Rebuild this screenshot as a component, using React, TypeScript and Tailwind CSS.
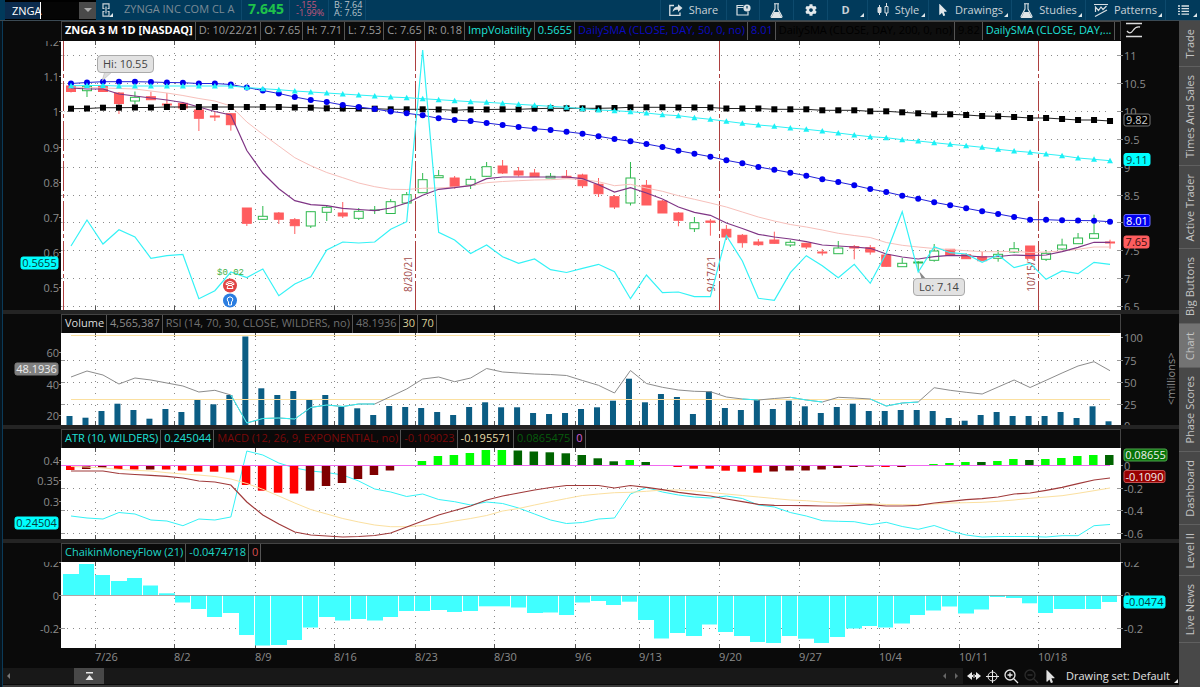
import type { ReactNode } from "react";
import { FaCog, FaMousePointer } from "react-icons/fa";

const LEFT = 61;
const WIDTH = 1060;
const STEP = 15.985;
const xAt = (i: number) => 71 + STEP * i;
const pct = (x: number) => `${((x - LEFT) / WIDTH) * 100}%`;

const weeks = [
  { x: 95, label: "7/26" },
  { x: 174, label: "8/2" },
  { x: 255, label: "8/9" },
  { x: 334, label: "8/16" },
  { x: 415, label: "8/23" },
  { x: 494, label: "8/30" },
  { x: 575, label: "9/6" },
  { x: 639, label: "9/13" },
  { x: 719, label: "9/20" },
  { x: 799, label: "9/27" },
  { x: 879, label: "10/4" },
  { x: 959, label: "10/11" },
  { x: 1038, label: "10/18" },
];

const sma50 = [83.5, 82.5, 81.7, 81.7, 81.7, 82, 82.5, 82.7, 83.5, 83.5, 84.5, 87.5, 90.5, 93.5, 97, 100, 102, 105, 107, 109, 111.5, 113.3, 115.3, 118.3, 120, 121, 123, 125, 127, 128.7, 130, 131.7, 133.7, 136.3, 139, 141.3, 144, 147, 150.7, 153.7, 156.7, 160.3, 163.3, 167, 169.7, 172.7, 175.7, 179.3, 182, 185.3, 189, 192, 195.7, 198.7, 202.3, 205.3, 208.3, 211.3, 214, 217, 219.7, 219.7, 220.3, 220.5, 220.7, 221.7];
const sma200 = [108.7, 108.5, 107.7, 107.7, 107.5, 107.5, 107, 107, 107, 107, 107, 107, 107, 107, 107.5, 107.7, 108.3, 108.5, 108.5, 108.7, 109.3, 109.3, 109.3, 109.5, 110.3, 109.5, 109.5, 109.3, 109.3, 108.7, 108.3, 108.3, 108.3, 108.3, 108, 107.3, 107.3, 107.3, 107.5, 107.5, 107.5, 108.5, 108.5, 108.5, 109.3, 109.3, 109.3, 110.3, 110.3, 110.3, 111.3, 111.3, 112.3, 113.3, 114.3, 114.3, 115, 116, 116.3, 117, 118, 118, 119, 120, 120, 121];
const sma100 = [85.7, 85.5, 85.5, 86, 86, 86, 86, 86, 86, 86, 86, 87.5, 88.7, 89.7, 91, 92, 93, 94, 95, 96, 97, 97.7, 98.7, 99.7, 100.7, 101.7, 102.3, 103.3, 104.3, 105.3, 106.3, 107.3, 108.7, 110, 110.7, 111.7, 113, 114.7, 115.7, 117.7, 119.3, 121.3, 123.3, 125, 126.3, 128, 129.3, 131, 133, 135, 136.7, 137.7, 139.7, 141, 142.7, 144.3, 145.7, 147.3, 149.3, 151, 152.3, 154, 155.7, 158, 159.3, 160.7];
const impVol = [246, 220, 244, 229.7, 237, 258.3, 255.7, 254.5, 298.7, 290.7, 272, 277.5, 269, 295.7, 284, 276.7, 250, 242, 243, 242, 229.3, 221.7, 50, 232.3, 240, 253.5, 245, 256.7, 263.3, 259, 269.7, 272.5, 268.3, 264.3, 271.7, 298.7, 275, 292.7, 292, 296.7, 296.7, 235.7, 261, 298.3, 300.3, 272.7, 255.7, 265.7, 277.7, 264.3, 283.3, 253.3, 211.7, 272, 246.7, 252.7, 254, 262.3, 255, 267.7, 263.3, 279.3, 271, 273.7, 262.3, 264.3];
const emaFast = [88, 89, 89, 94, 96, 98, 100, 102.5, 107, 111.5, 115, 150.5, 173, 188.7, 200.7, 204.7, 205.7, 208.3, 209.5, 210.7, 208, 203, 195.3, 189.3, 187.7, 185.7, 178.7, 177, 177, 177, 177, 177, 178.7, 184.7, 192, 187.7, 193, 199, 207, 212.3, 215.3, 223, 228.5, 234.3, 237, 239, 241.7, 245, 246, 247, 248.3, 254, 257, 259, 256.7, 255.3, 255.7, 257, 256.5, 255, 255.7, 255, 251.7, 247.3, 242.3, 242.3];
const emaSlow = [87, 87.5, 88, 88.5, 89, 91, 93, 95.5, 98.5, 101, 106, 122, 134.3, 146, 157.7, 165.7, 172.5, 177.7, 183, 186.7, 189.3, 189.5, 188.3, 188, 187, 185.5, 182.7, 181.5, 180.7, 180, 179.7, 178.7, 179.5, 181.7, 185.7, 184.3, 188, 191.3, 195.7, 199.3, 203, 207, 212, 217, 221, 224.5, 227, 230, 233.3, 235.5, 237.5, 242.5, 245.3, 247, 248.5, 249.7, 250.7, 251.7, 251.7, 251.3, 252.5, 252, 251, 249.3, 247, 247];

// [top, bottom, high, low, up]
const candles: [number, number, number, number, 0 | 1][] = [
  [86, 91.5, 85, 92.5, 0], [86.3, 90.7, 84, 97, 1], [86.5, 91.5, 86, 92, 0], [93, 103.5, 92, 114, 0],
  [97.3, 101, 91.5, 104, 1], [96.7, 99.7, 91.7, 100, 0], [104, 105, 93, 108, 0], [103.3, 108, 102, 110, 0],
  [110, 118.3, 109, 131, 0], [116, 117, 112, 121, 0], [113.7, 124.7, 113, 130.7, 0], [208, 223.3, 208, 226, 0],
  [216.3, 219.3, 206, 220, 1], [213, 219.3, 212, 224, 0], [219.7, 225.7, 218, 234, 0], [211.7, 226, 211, 228, 1],
  [207.3, 212.3, 205, 221, 1], [213, 216, 202, 218, 0], [211.3, 218.3, 208, 220, 1], [210, 210.5, 206, 214, 1],
  [201.7, 213.5, 199, 214, 1], [194.7, 203, 192, 203, 1], [179.7, 192.7, 173, 193, 1], [175.7, 177.7, 170, 178, 1],
  [178, 186.3, 176, 188.7, 0], [179.3, 185, 176, 189, 1], [166.7, 176.3, 162, 177, 1], [166, 173, 160, 174, 0],
  [171, 175, 167, 176.5, 0], [173, 176.7, 169, 177, 0], [176.3, 178, 173, 178, 1], [176.3, 177.7, 170, 178, 0],
  [175, 185.7, 173.7, 188, 0], [184.3, 193.7, 178, 197, 0], [196.7, 207, 195, 209, 0], [178, 203, 162, 205.5, 1],
  [185.3, 205, 180, 205, 0], [201, 213, 200, 213, 0], [213, 220.3, 212, 226.3, 0], [222.7, 228.7, 217, 232, 1],
  [221, 222.3, 219, 235.7, 0], [229.3, 237, 225, 240, 0], [235.3, 242.7, 234, 247.7, 0], [242, 244.7, 239, 246, 0],
  [240, 243.3, 231.7, 244, 0], [242.3, 245, 240, 247, 1], [243.3, 247, 243, 249, 0], [252, 253, 249, 255.5, 0],
  [248, 253.7, 241, 254, 1], [246.5, 248, 245, 259.3, 0], [247.7, 252, 245, 254.7, 0], [255, 266.3, 254, 267, 0],
  [263.3, 266.7, 258, 267, 1], [262, 263, 261, 271, 1], [251, 260.3, 244, 261.7, 1], [249.3, 255.3, 249, 255, 0],
  [254.7, 258.7, 253, 259, 0], [256.7, 260.7, 252, 261, 0], [254.3, 258.3, 250, 261.7, 1], [248.7, 252, 242, 253, 1],
  [246, 258.3, 246, 258, 0], [253.3, 259.3, 250, 261, 1], [245, 249, 238.7, 250, 1], [238, 243.7, 233, 244, 1],
  [233.7, 238.3, 214.7, 239, 1], [242, 243, 239.7, 248.7, 0],
];

const volume = [416, 417.7, 411, 403.7, 410, 418.7, 409, 412, 399.5, 404.3, 395, 336.5, 388.3, 395, 391, 399.7, 395, 407, 408.3, 415, 406, 407, 408, 412, 415, 407, 402.3, 407.3, 407.3, 413, 414, 413, 409, 407.3, 400.7, 378.7, 402.3, 394, 397, 414, 391.3, 408, 410, 400, 409, 400.7, 406.3, 413, 407, 403.7, 411, 411, 410, 410, 411, 418, 420.7, 415, 412, 416, 416, 416, 412, 418, 406.3, 421.3];
const rsi = [377, 371, 375, 384, 378, 380, 383, 386, 392, 390.3, 395, 423, 418.5, 418, 419, 407.5, 405, 406.5, 404, 404, 396.5, 389, 379, 377, 381.7, 378, 368.5, 372, 373, 374, 374.5, 375.5, 380.5, 385.3, 393, 370.5, 383.5, 387.3, 390, 391.3, 391.7, 397, 399, 400, 398.5, 397.3, 400, 402, 397.3, 398, 399, 406, 403, 402, 387.7, 390.3, 392.3, 394, 387, 380, 387.5, 380.3, 373, 366, 361.7, 370.7];
const oversold = [[10, 19], [42, 43], [45, 47], [50, 53]];

const histogram = [470, 469, 467.5, 469, 469.5, 469.5, 469.5, 470.5, 471.7, 471.7, 472.5, 485, 490.7, 492.7, 493.5, 490.7, 486, 483, 479, 475, 470.5, 466, 461, 456, 455, 453, 450, 450, 450.5, 451.5, 452.3, 453.3, 455, 458.3, 461.3, 460, 462, 465, 467, 468.7, 468.7, 470.7, 471.7, 472.7, 471.5, 470.5, 470.5, 469.5, 468, 467, 466.7, 467, 467, 466, 464, 463, 462, 462, 461, 459, 460, 459, 458, 456, 455, 455];
const macd = [471, 471, 471, 473.5, 474.5, 475.3, 476.3, 478, 481, 482, 485, 502, 515, 524, 532, 535, 536, 537, 536.5, 535.5, 533, 527, 521, 515, 510.5, 506, 500, 496, 493, 490, 487.5, 485.5, 485.5, 485.5, 488, 485.5, 487.3, 489.7, 492.3, 494.3, 496, 499, 501.7, 504.3, 505.3, 505.5, 505.7, 506, 506, 505.3, 504.7, 506, 506, 505.3, 503, 501.3, 499.7, 498.7, 497, 494, 493, 490.3, 487.3, 483.7, 480, 478];
const signal = [466.5, 467, 468, 469.3, 470.3, 471, 472.7, 474, 475, 476.5, 479, 483.5, 489.3, 496, 503, 509.5, 514, 518.5, 522, 525, 526.7, 526.7, 525.5, 524, 521, 518.5, 515.5, 511, 508.5, 505, 501.7, 498.5, 495.5, 494, 492.7, 492.3, 491.3, 490, 490, 491, 492.5, 494, 495.5, 497, 498.5, 500, 500.7, 502, 503, 503.3, 503.7, 504.5, 504.7, 504.7, 504, 503, 502.7, 502.3, 501.3, 500, 498.3, 497, 495.7, 493.3, 490.7, 488];
const atr = [516, 518, 519, 512.5, 514, 520, 521, 525.7, 519, 520, 517, 451, 455, 463, 468, 471, 472.5, 475, 481, 489, 492, 496.5, 494, 499.5, 501.7, 505, 502, 503.5, 508, 514, 520, 523.5, 522.5, 519, 518, 494, 487.5, 492, 495, 497, 498, 496, 498.5, 505, 507, 512.5, 516, 520.7, 521.3, 521.7, 524.7, 522.3, 526.5, 529.3, 525.5, 531, 535, 537, 536.5, 536.5, 536.5, 537, 535.7, 535.7, 525.7, 524.5];
const moneyFlow = [574, 564, 575, 581, 578, 585.5, 593.3, 602.5, 609, 617, 613, 635, 645.5, 645, 640, 627.5, 617, 620.5, 619, 620.5, 617, 611, 611, 610, 612, 611, 606.3, 606.3, 607.5, 613, 612.5, 615, 602.5, 601, 605, 601.7, 620, 638.5, 633, 636, 624.5, 632, 636, 642, 643, 636, 638.7, 643, 637, 628.5, 626, 627.5, 623.5, 615, 610.5, 606.5, 613.5, 609.5, 597, 598, 603.3, 613, 609, 609, 609, 602];
const joined = new Set([0, 3, 6, 10, 13, 16, 19, 23, 26, 29, 33, 36, 39, 42, 46, 49, 52, 56, 59, 62]);

const GREEN = "#2db84d";
const RED = "#ff5d5f";

function histColor(i: number) {
  const v = 465 - histogram[i];
  const prev = i ? 465 - histogram[i - 1] : 0;
  if (v >= 0) return v > prev || i === 27 ? "#00ff00" : "#006400";
  return v < prev || [6, 9, 39, 40].includes(i) ? "#ff0000" : "#7f0000";
}

interface LineProps {
  data: number[];
  color: string;
  from?: number;
  to?: number;
  width?: number;
}

function Line({ data, color, from = 0, to = 65, width = 1 }: LineProps) {
  const points = data
    .slice(from, to + 1)
    .map((y, i) => `${xAt(from + i)},${y}`)
    .join(" ");
  return <polyline points={points} fill="none" stroke={color} strokeWidth={width} />;
}

interface Tick {
  y: number;
  label: string;
}

interface Badge extends Tick {
  w: number;
  fill: string;
  color: string;
  border?: string;
}

interface AxisProps {
  top: number;
  height: number;
  ticks: Tick[];
  badges?: Badge[];
  side: "left" | "right";
  children?: ReactNode;
}

function Axis({ top, height, ticks, badges = [], side, children }: AxisProps) {
  const left = side === "left";
  return (
    <svg
      width={58}
      height={height}
      viewBox={`0 ${top} 58 ${height}`}
      className="shrink-0 text-[11px]"
    >
      {ticks.map((t) => (
        <g key={t.y}>
          <path d={left ? `M56 ${t.y}h2` : `M0 ${t.y}h2`} stroke="#8c8c8c" />
          {t.label && (
            <text x={left ? 56 : 3} y={t.y + 4} textAnchor={left ? "end" : "start"} fill="#8c8c8c">
              {t.label}
            </text>
          )}
        </g>
      ))}
      {badges.map((b) => (
        <g key={b.label}>
          <rect
            x={left ? 55 - b.w : 3}
            y={b.y - 6}
            width={b.w}
            height={12}
            rx={2}
            fill={b.fill}
            stroke={b.border ?? b.fill}
          />
          <text x={left ? 55 - b.w / 2 : 3 + b.w / 2} y={b.y + 4} textAnchor="middle" fill={b.color}>
            {b.label}
          </text>
        </g>
      ))}
      {children}
    </svg>
  );
}

function Plot({ top, height, rows, children }: { top: number; height: number; rows: number[]; children: ReactNode }) {
  return (
    <svg
      viewBox={`${LEFT} ${top} ${WIDTH} ${height}`}
      preserveAspectRatio="none"
      height={height}
      className="relative block w-full"
    >
      <g stroke="#8a8a8a" strokeDasharray="1 5">
        {weeks.map((w) => (
          <path key={w.x} d={`M${w.x}.5 ${top}v${height}`} />
        ))}
        {rows.map((y) => (
          <path key={y} d={`M${LEFT + 6} ${y}H1110`} />
        ))}
      </g>
      <g stroke="#555">
        {weeks.map((w) => (
          <path key={w.x} d={`M${w.x}.5 ${top}v4M${w.x}.5 ${top + height}v-4`} />
        ))}
        {rows.map((y) => (
          <path key={y} d={`M${LEFT} ${y}h4M1121 ${y}h-4`} stroke="#999" />
        ))}
      </g>
      {children}
    </svg>
  );
}

function Panel({ left, right, children }: { left: ReactNode; right: ReactNode; children: ReactNode }) {
  return (
    <div className="flex">
      {left}
      <div className="relative min-w-0 flex-1 bg-white">{children}</div>
      {right}
    </div>
  );
}

function Legend({ items }: { items: [string, string][] }) {
  return (
    <div className="mx-[58px] flex h-[19px] items-stretch overflow-hidden border-x border-t border-[#444] text-[11px] leading-4">
      {items.map(([text, style]) => (
        <span key={text} className={`shrink-0 border-r border-[#555] pr-[2px] pl-[3px] whitespace-nowrap ${style}`}>
          {text}
        </span>
      ))}
    </div>
  );
}

function Corner() {
  return (
    <span className="absolute right-[3px] bottom-[3px] border-b-4 border-l-4 border-b-[#dfe6ea] border-l-transparent" />
  );
}

function ToolButton({ width, label, menu, children }: { width: string; label: string; menu?: boolean; children: ReactNode }) {
  return (
    <button
      aria-label={label}
      className={`relative flex shrink-0 items-center justify-center gap-[6px] border-l border-[#0d4a6d] ${width}`}
    >
      {children}
      {menu && <Corner />}
    </button>
  );
}

function Toolbar() {
  return (
    <header className="flex h-[21px] items-stretch border-b border-[#3b4a54] bg-[#013a5b] text-[11px] leading-[18px] text-[#c9d2d8]">
      <div className="ml-[5px] flex w-[91px] items-center bg-black">
        <label htmlFor="symbol" className="sr-only">
          Symbol
        </label>
        <div className="relative flex-1">
          <input
            id="symbol"
            defaultValue="ZNGA"
            className="block h-[17px] w-full bg-[linear-gradient(90deg,#0b2b4d_35px,#050505_35px)] pl-[7px] text-[11px] leading-[17px] text-white outline-none"
          />
          <span className="absolute top-0 left-[35px] h-[17px] w-px bg-white" />
        </div>
        <button aria-label="Symbol list" className="flex h-[17px] w-[17px] items-center justify-center bg-[#4a4a4a]">
          <span className="border-x-4 border-t-4 border-x-transparent border-t-[#aaa]" />
        </button>
      </div>
      <button aria-label="Link symbol" className="relative flex w-[20px] items-center justify-center">
        <svg width="8" height="14" viewBox="0 0 8 14" fill="none" stroke="#c9d2d8" strokeWidth="1.200">
          <path d="M2.500 5.500H1V.8h6v4.700H5.500M2.500 8.500H1v4.700h6V8.500H5.500M4 3.500v7" />
        </svg>
        <Corner />
      </button>
      <span className="w-[125px] pl-[8px] whitespace-nowrap text-[#7b8b96]">ZYNGA INC COM CL A</span>
      <span className="w-[48px] border-l border-[#0d4a6d] pl-[6px] text-[14px] font-bold text-[#1fc24a]">7.645</span>
      <div className="w-[39px] border-l border-[#0d4a6d] pt-px pl-[6px] text-[9px] leading-[8px] text-[#c6567c]">
        <p>-.155</p>
        <p>-1.99%</p>
      </div>
      <div className="w-[38px] border-x border-[#0d4a6d] pt-px pl-[5px] text-[9px] leading-[8px] whitespace-nowrap text-[#b9c4cb]">
        <p>B: 7.64</p>
        <p>A: 7.65</p>
      </div>
      <nav className="ml-auto flex">
        <ToolButton width="w-[66px]" label="Share">
          <svg width="14" height="12" viewBox="0 0 14 12" fill="none" stroke="#d8dfe3" strokeWidth="1.3">
            <path d="M5 1.500H.8V11.300H11V8.500" />
            <path d="M13.500 4 9 .3V2.500C5.500 2.700 4 5 3.600 8 5 6 6.500 5.600 9 5.700V8Z" fill="#d8dfe3" stroke="none" />
          </svg>
          Share
        </ToolButton>
        <ToolButton width="w-[33px]" label="Calendar">
          <svg width="15" height="12" viewBox="0 0 15 12" fill="none" stroke="#d8dfe3" strokeWidth="1.200">
            <path d="M7.500 1.500H1v9.500h11V7.500M1 3.500h6.500" />
            <circle cx="11" cy="4" r="3.600" fill="#d8dfe3" stroke="none" />
            <path d="M11 2v2.500" stroke="#013a5b" />
          </svg>
        </ToolButton>
        <ToolButton width="w-[34px]" label="Lab">
          <FlaskIcon />
        </ToolButton>
        <ToolButton width="w-[34px]" label="Settings">
          <FaCog size={12} color="#e2e8eb" />
        </ToolButton>
        <ToolButton width="w-[40px]" label="Aggregation" menu>
          <span className="pr-1 font-bold">D</span>
        </ToolButton>
        <ToolButton width="w-[61px]" label="Style" menu>
          <svg width="12" height="14" viewBox="0 0 12 14" fill="none" stroke="#d8dfe3">
            <path d="M2.500 2v10M9.500 0v3M9.500 10v3" />
            <path d="M1 4.500h3v5H1z" fill="#d8dfe3" />
            <path d="M8 3.500h3v6.500H8z" />
          </svg>
          Style
        </ToolButton>
        <ToolButton width="w-[83px]" label="Drawings" menu>
          <FaMousePointer size={12} color="#e2e8eb" />
          Drawings
        </ToolButton>
        <ToolButton width="w-[74px]" label="Studies" menu>
          <FlaskIcon />
          Studies
        </ToolButton>
        <ToolButton width="w-[80px]" label="Patterns" menu>
          <svg width="14" height="15" viewBox="0 0 14 15" fill="none" stroke="#d8dfe3" strokeWidth="1.200">
            <path d="M0 1.500h14M1 13.500 13 7M1.500 9V4l3 3.500L7 4l2 2.500L12.500 3" />
          </svg>
          Patterns
        </ToolButton>
        <ToolButton width="w-[35px]" label="Menu" menu>
          <svg width="11" height="10" viewBox="0 0 11 10" stroke="#d8dfe3" strokeWidth="1.300">
            <path d="M0 1h2M3.500 1H11M0 3.700h2M3.500 3.700H11M0 6.400h2M3.500 6.400H11M0 9.100h2M3.500 9.100H11" />
          </svg>
        </ToolButton>
      </nav>
    </header>
  );
}

function FlaskIcon() {
  return (
    <svg width="13" height="15" viewBox="0 0 13 15" fill="none" stroke="#dfe5e8" strokeWidth="1.100">
      <path d="M4 .7h5M5 1v5L1 13.500q0 1 1 1h9q1 0 1-1L8 6V1" />
      <path d="M4 9h5l2.500 5h-10z" fill="#dfe5e8" stroke="none" />
    </svg>
  );
}

const priceLegend: [string, string][] = [
  ["ZNGA 3 M 1D [NASDAQ]", "font-bold text-white"],
  ["D: 10/22/21", "text-[#9a9a9a]"],
  ["O: 7.65", "text-[#9a9a9a]"],
  ["H: 7.71", "text-[#9a9a9a]"],
  ["L: 7.53", "text-[#9a9a9a]"],
  ["C: 7.65", "text-[#9a9a9a]"],
  ["R: 0.18", "text-[#9a9a9a]"],
  ["ImpVolatility", "text-[#1fe0d8]"],
  ["0.5655", "text-[#1fe0d8]"],
  ["DailySMA (CLOSE, DAY, 50, 0, no)", "text-[#0a0ac0]"],
  ["8.01", "text-[#0a0ac0]"],
  ["DailySMA (CLOSE, DAY, 200, 0, no)", "bg-[#0e0e0e] text-black"],
  ["9.82", "bg-[#0e0e0e] text-black"],
  ["DailySMA (CLOSE, DAY,...", "text-[#1fe0d8]"],
];

// the 8 is covered by the 8.01 badge, so it has no label
const priceTicks = ["11", "10.5", "10", "9.5", "9", "8.5", "", "7.5", "7", "6.5"].map((label, i) => ({
  y: 55.5 + Math.round(i * 27.9),
  label,
}));
const priceRows = priceTicks.map((t) => t.y);

function PricePanel() {
  return (
    <Panel
      left={
        <Axis
          side="left"
          top={41}
          height={269}
          ticks={["1.2", "1.1", "1", "0.9", "0.8", "0.7", "0.6", "0.5"].map((label, i) => ({
            y: 41.5 + Math.round(i * 35.2),
            label,
          }))}
          badges={[{ y: 263, w: 37, label: "0.5655", fill: "#00ffff", color: "#063b3b" }]}
        />
      }
      right={
        <Axis
          side="right"
          top={41}
          height={269}
          ticks={priceTicks}
          badges={[
            { y: 120, w: 26, label: "9.82", fill: "#000", color: "#ccc", border: "#777" },
            { y: 159.5, w: 26, label: "9.11", fill: "#00ffff", color: "#063b3b" },
            { y: 220.5, w: 26, label: "8.01", fill: "#0000f0", color: "#fff", border: "#6a6aff" },
            { y: 242, w: 25, label: "7.65", fill: "#ff5d5f", color: "#3a0c0c" },
          ]}
        />
      }
    >
      {[
        { x: 402, label: "8/20/21" },
        { x: 705, label: "9/17/21" },
        { x: 1025, label: "10/15/21" },
      ].map((d) => (
        <span
          key={d.label}
          style={{ left: pct(d.x) }}
          className="absolute bottom-[18px] rotate-180 text-[10px] leading-3 text-[#a34b4b] [writing-mode:vertical-rl]"
        >
          {d.label}
        </span>
      ))}
      <Plot top={41} height={269} rows={priceRows}>
        <g stroke="#fff" strokeWidth={2}>
          {[63, 415, 719, 1038].map((x) => (
            <path key={x} d={`M${x}.5 41v269`} />
          ))}
        </g>
        <g stroke="#ad3f3f" strokeDasharray="30 3 4 3">
          {[63, 415, 719, 1038].map((x) => (
            <path key={x} d={`M${x}.5 41v269`} />
          ))}
        </g>
        {candles.map(([t, b, h, l, up], i) => (
          <g key={i} stroke={up ? GREEN : RED}>
            <path d={`M${xAt(i)} ${h}V${t}M${xAt(i)} ${b}V${l}`} />
            <rect x={xAt(i) - 4.5} y={t} width={9} height={b - t} fill={up ? "#fff" : RED} />
          </g>
        ))}
        <Line data={emaSlow} color="#f7c0bb" />
        <Line data={emaFast} color="#7f3585" width={1.2} />
        <Line data={sma200} color="#222" />
        {sma200.map((y, i) => (
          <rect key={i} x={xAt(i) - 3} y={y - 3} width={6} height={6} />
        ))}
        <Line data={sma50} color="#2222d8" />
        {sma50.map((y, i) => (
          <circle key={i} cx={xAt(i)} cy={y} r={3} fill="#0000f0" />
        ))}
        <Line data={sma100} color="#2ef0f5" />
        {sma100.map((y, i) => (
          <path key={i} d={`M${xAt(i)} ${y - 3}l3 5.500h-6z`} fill="#1cf0f5" />
        ))}
        <Line data={impVol} color="#34f2f6" width={1.2} />
        <g>
          <circle cx="230" cy="285.500" r="7" fill="#e04444" />
          <path d="M226 283.500q4-4 8 0v1h-2v-1h-4v1h-2zM227 288.500l1-3h4l1 3z" fill="none" stroke="#fff" />
          <circle cx="230" cy="300.500" r="7" fill="#2b7de0" />
          <path d="M228.500 302q-2-2-1-4 2.500-2.500 5 0 1 2-1 4v3h-3z" fill="none" stroke="#fff" />
        </g>
        <path d="M102 81l3-10h8z" fill="#ddd" stroke="#aaa" strokeWidth=".5" />
        <path d="M919 271l3 9h5z" fill="#888" />
      </Plot>
      <span
        style={{ left: pct(217) }}
        className="absolute top-[226px] font-['Liberation_Mono',monospace] text-[9px] leading-3 text-[#3cb043]"
      >
        $0.02
      </span>
      <span
        style={{ left: pct(97) }}
        className="absolute top-[14px] rounded border border-[#aaa] bg-[#e2e2e2] px-[5px] text-[11px] leading-4 text-[#444]"
      >
        Hi: 10.55
      </span>
      <span
        style={{ left: pct(913) }}
        className="absolute top-[237px] rounded border border-[#aaa] bg-[#e2e2e2] px-[5px] text-[11px] leading-4 text-[#444]"
      >
        Lo: 7.14
      </span>
    </Panel>
  );
}

function VolumePanel() {
  return (
    <Panel
      left={
        <Axis
          side="left"
          top={333}
          height={92}
          ticks={[
            { y: 352.5, label: "60" },
            { y: 384.5, label: "40" },
            { y: 415.5, label: "20" },
          ]}
          badges={[{ y: 369, w: 43, label: "48.1936", fill: "#808080", color: "#eee" }]}
        />
      }
      right={
        <Axis
          side="right"
          top={333}
          height={92}
          ticks={[
            { y: 337.5, label: "100" },
            { y: 360.5, label: "75" },
            { y: 382.5, label: "50" },
            { y: 404.5, label: "25" },
            { y: 425.5, label: "0" },
          ]}
        >
          <text transform="translate(54 405) rotate(-90)" fill="#8c8c8c">
            &lt;millions&gt;
          </text>
        </Axis>
      }
    >
      <Plot top={333} height={92} rows={[360.5, 382.5, 404.5]}>
        {volume.map((y, i) => (
          <rect key={i} x={xAt(i) - 4.5} y={y} width={6} height={425 - y} fill="#0b5d84" />
        ))}
        <path d="M71 335.500H1110M71 399.500H1110" stroke="#fbe0a0" />
        <Line data={rsi} color="#8c8c8c" />
        {oversold.map(([a, b]) => (
          <Line key={a} data={rsi} from={a} to={b} color="#34f2f6" />
        ))}
      </Plot>
    </Panel>
  );
}

function MomentumPanel() {
  return (
    <Panel
      left={
        <Axis
          side="left"
          top={448}
          height={91}
          ticks={[
            { y: 460.5, label: "0.4" },
            { y: 480.5, label: "0.35" },
            { y: 501.5, label: "0.3" },
          ]}
          badges={[{ y: 523, w: 43, label: "0.24504", fill: "#00ffff", color: "#063b3b" }]}
        />
      }
      right={
        <Axis
          side="right"
          top={448}
          height={91}
          ticks={[
            { y: 465.5, label: "0" },
            { y: 488.5, label: "-0.2" },
            { y: 510.5, label: "-0.4" },
            { y: 533.5, label: "-0.6" },
          ]}
          badges={[
            { y: 455, w: 43, label: "0.08655", fill: "#067306", color: "#eee", border: "#4ea64e" },
            { y: 476.5, w: 41, label: "-0.1090", fill: "#990000", color: "#eee", border: "#c05050" },
          ]}
        />
      }
    >
      <Plot top={448} height={91} rows={[488.5, 510.5, 533.5]}>
        <Line data={atr} color="#34f2f6" />
        {histogram.map((y, i) => (
          <rect
            key={i}
            x={xAt(i) - 5}
            y={Math.min(y, 465)}
            width={8.5}
            height={Math.abs(y - 465)}
            fill={histColor(i)}
          />
        ))}
        <path d="M61 465.500H1110" stroke="#f06af0" />
        <Line data={signal} color="#fbe0a0" />
        <Line data={macd} color="#a03a3a" width={1.2} />
      </Plot>
    </Panel>
  );
}

function FlowPanel() {
  const ticks = [
    { y: 562.5, label: "0.2" },
    { y: 595.5, label: "0" },
    { y: 628.5, label: "-0.2" },
  ];
  return (
    <Panel
      left={<Axis side="left" top={562} height={86} ticks={ticks} />}
      right={
        <Axis
          side="right"
          top={562}
          height={86}
          ticks={ticks}
          badges={[{ y: 602, w: 41, label: "-0.0474", fill: "#00ffff", color: "#063b3b" }]}
        />
      }
    >
      <Plot top={562} height={86} rows={[628.5]}>
        {moneyFlow.map((y, i) => (
          <rect
            key={i}
            x={Math.round(xAt(i) - 8)}
            y={Math.min(y, 595)}
            width={joined.has(i) ? 16 : 15}
            height={Math.abs(y - 595)}
            fill="#40ffff"
          />
        ))}
        <path d="M61 595.500H1121" stroke="#9c8f8f" strokeWidth=".8" />
      </Plot>
    </Panel>
  );
}

function DateAxis() {
  return (
    <div className="mx-[58px] flex h-5 text-[11px] leading-[18px] text-[#8c8c8c]">
      <span className="basis-0" style={{ flexGrow: weeks[0].x - LEFT }} />
      {weeks.map((w, i) => (
        <span
          key={w.label}
          className="w-0 basis-0 whitespace-nowrap"
          style={{ flexGrow: (weeks[i + 1]?.x ?? LEFT + WIDTH) - w.x }}
        >
          {w.label}
        </span>
      ))}
    </div>
  );
}

function BottomBar() {
  return (
    <footer className="flex h-4 items-stretch text-[#e0e0e0]">
      <div className="flex flex-1 items-center bg-[#181818]">
        <button aria-label="Scroll left" className="ml-[4px] border-y-[3px] border-r-[3px] border-y-transparent border-r-[#777]" />
        <button aria-label="Show panel" className="ml-[64px] flex h-4 w-[30px] items-center justify-center bg-[#484848]">
          <svg width="9" height="9" viewBox="0 0 9 9" fill="#e8e8e8">
            <path d="M1 0h7v1.500H1zM4.500 3 8.500 8h-8z" />
          </svg>
        </button>
        <button aria-label="Previous" className="ml-auto border-y-[3px] border-r-[3px] border-y-transparent border-r-[#666]" />
        <button aria-label="Next" className="mr-[5px] ml-[9px] border-y-[3px] border-l-[3px] border-y-transparent border-l-[#666]" />
      </div>
      <div className="flex items-center gap-[5px] pl-[4px]">
        <button aria-label="Expand">
          <svg width="14" height="10" viewBox="0 0 14 10" fill="#e8e8e8">
            <path d="M0 5 5 1v3h1v2H5v3zM14 5 9 1v3H8v2h1v3zM6.500 3h1v4h-1z" />
          </svg>
        </button>
        <button aria-label="Crosshair">
          <svg width="13" height="13" viewBox="0 0 13 13" fill="none" stroke="#e8e8e8">
            <circle cx="6.500" cy="6.500" r="4.500" />
            <path d="M6.500 0v13M0 6.500h13" />
          </svg>
        </button>
        <ZoomButton label="Zoom in" color="#e8e8e8" plus />
        <ZoomButton label="Zoom out" color="#2c2c2c" />
        <button aria-label="Pointer">
          <FaMousePointer size={13} />
        </button>
        <button className="relative ml-[4px] pr-[9px] text-[11px] leading-[14px]">
          Drawing set: Default
          <span className="absolute right-px bottom-0 border-b-4 border-l-4 border-b-[#e8e8e8] border-l-transparent" />
        </button>
      </div>
    </footer>
  );
}

function ZoomButton({ label, color, plus }: { label: string; color: string; plus?: boolean }) {
  return (
    <button aria-label={label}>
      <svg width="15" height="15" viewBox="0 0 15 15" fill="none" stroke={color} strokeWidth="1.300">
        <circle cx="6" cy="6" r="5" />
        <path d={plus ? "M9.500 9.500 14 14M3.500 6h5M6 3.500v5" : "M9.500 9.500 14 14M3.500 6h5"} />
      </svg>
    </button>
  );
}

const tabs = ["Trade", "Times And Sales", "Active Trader", "Big Buttons", "Chart", "Phase Scores", "Dashboard", "Level II", "Live News"];

function SideTabs() {
  return (
    <aside className="flex w-[21px] shrink-0 flex-col bg-[#484848] text-[11px] leading-[19px] text-[#c4c4c4]">
      {tabs.map((tab) => (
        <button
          key={tab}
          className={`flex w-full justify-center border-b border-[#606060] pt-2 pb-[7px] ${tab === "Chart" ? "bg-[#737373]" : ""}`}
        >
          <span className="rotate-180 [writing-mode:vertical-rl]">{tab}</span>
        </button>
      ))}
    </aside>
  );
}

function Divider() {
  return <div className="h-1 bg-[#242424]" />;
}

export default function App() {
  return (
    <div className="flex min-h-screen flex-col bg-[#0a0a0a] font-['Open_Sans',sans-serif]">
      <Toolbar />
      <div className="flex flex-1">
        <div className="w-[3px] shrink-0 border-r border-[#0b3a58] bg-[#07141d]" />
        <main className="min-w-0 flex-1">
          <div className="relative pb-px">
            <Legend items={priceLegend} />
            <svg className="absolute top-[1px] right-[37px]" width="16" height="16" viewBox="0 0 16 16" fill="none" stroke="#ddd" strokeWidth="1.300">
              <path d="M0 1.500h16M0 14.500h16M1 9q3 4 6-.5T14 5" />
            </svg>
          </div>
          <PricePanel />
          <Divider />
          <Legend
            items={[
              ["Volume", "text-[#ddd]"],
              ["4,565,387", "text-[#8c8c8c]"],
              ["RSI (14, 70, 30, CLOSE, WILDERS, no)", "text-[#707070]"],
              ["48.1936", "text-[#707070]"],
              ["30", "text-[#d8cf9a]"],
              ["70", "text-[#d8cf9a]"],
            ]}
          />
          <VolumePanel />
          <Divider />
          <Legend
            items={[
              ["ATR (10, WILDERS)", "text-[#1fe0d8]"],
              ["0.245044", "text-[#1fe0d8]"],
              ["MACD (12, 26, 9, EXPONENTIAL, no)", "text-[#7a0808]"],
              ["-0.109023", "text-[#7a0808]"],
              ["-0.195571", "text-[#e6dba8]"],
              ["0.0865475", "text-[#075c0c]"],
              ["0", "text-[#d45fd4]"],
            ]}
          />
          <MomentumPanel />
          <Divider />
          <Legend
            items={[
              ["ChaikinMoneyFlow (21)", "text-[#1fd8c8]"],
              ["-0.0474718", "text-[#1fd8c8]"],
              ["0", "text-[#d85050]"],
            ]}
          />
          <FlowPanel />
          <DateAxis />
          <BottomBar />
          <div className="mt-px h-[2px] bg-[#3a3a3a]" />
        </main>
        <SideTabs />
      </div>
    </div>
  );
}
